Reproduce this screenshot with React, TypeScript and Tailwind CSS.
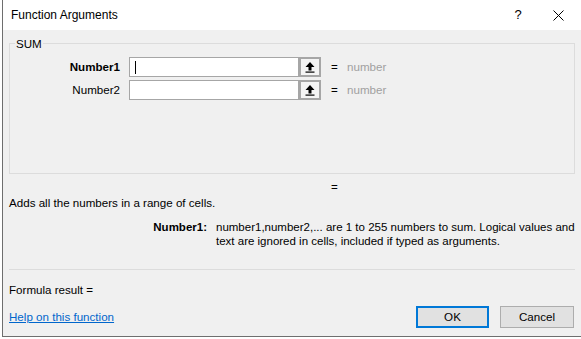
import React from "react";

const font = { fontFamily: '"Liberation Sans", Arial, sans-serif' };

function RefButton() {
  return (
    <div className="flex h-[20px] w-[22px] items-center justify-center border-2 border-[#a6a6a6] bg-[#f4f4f4]">
      <svg width="10" height="11" viewBox="0 0 10 11">
        <polygon points="5,0 9.5,5 6.5,5 6.5,8.5 3.5,8.5 3.5,5 0.5,5" fill="#000" />
        <rect x="0.5" y="9.5" width="9" height="1.2" fill="#000" />
      </svg>
    </div>
  );
}

function ArgRow({ label, bold, cursor }: { label: string; bold?: boolean; cursor?: boolean }) {
  return (
    <div className="flex h-[20px] items-center">
      <div className={`w-[119px] pr-[9px] text-right text-[11.6px] text-[#000] ${bold ? "font-bold" : ""}`}>{label}</div>
      <div className="flex h-[20px] w-[170px] items-center border border-[#a6a6a6] bg-white pl-[5px]">
        {cursor && <div className="h-[13px] w-px bg-black" />}
      </div>
      <RefButton />
      <div className="ml-[10px] w-[16px] text-[11.6px] text-black">=</div>
      <div className="text-[11.6px] text-[#a0a0a0]">number</div>
    </div>
  );
}

export default function App() {
  return (
    <div className="h-[339px] w-[581px] overflow-hidden bg-white" style={font}>
      <div className="ml-[2px] flex h-[337px] w-[579px] flex-col border-b border-l border-[#6e6e6e] bg-[#f0f0f0]">
        {/* Title bar */}
        <div className="flex h-[30px] shrink-0 items-center bg-white pl-[8px]">
          <div className="flex-1 text-[12px] text-black">Function Arguments</div>
          <div className="w-[20px] text-center text-[13px] text-black">?</div>
          <div className="ml-[20px] mr-[13px] flex w-[20px] items-center justify-center">
            <svg width="11" height="11" viewBox="0 0 11 11">
              <path d="M0.5 0.5 L10.5 10.5 M10.5 0.5 L0.5 10.5" stroke="#000" strokeWidth="1" />
            </svg>
          </div>
        </div>

        {/* Body */}
        <div className="flex flex-1 flex-col px-[6px]">
          {/* Group box */}
          <div className="relative mt-[13px] h-[131px] w-[566px] border border-[#dcdcdc]">
            <div className="absolute left-[5px] top-[-7px] bg-[#f0f0f0] px-[1px] text-[11.6px] leading-[14px] text-black">SUM</div>
            <div className="mt-[13px] flex flex-col gap-[3px]">
              <ArgRow label="Number1" bold cursor />
              <ArgRow label="Number2" />
            </div>
          </div>

          <div className="ml-[322px] mt-[6px] h-[14px] text-[11.6px] leading-[14px] text-black">=</div>
          <div className="mt-[2px] text-[11.6px] leading-[14px] text-black">Adds all the numbers in a range of cells.</div>

          <div className="mt-[10px] flex text-[11.5px] leading-[14px] text-black">
            <div className="w-[207px] shrink-0 pr-[9px] text-right font-bold">Number1:</div>
            <div className="w-[362px] shrink-0">
              number1,number2,... are 1 to 255 numbers to sum. Logical values and text are ignored in cells, included if typed as arguments.
            </div>
          </div>

          <div className="mt-[21px] h-px w-[566px] bg-[#dcdcdc]" />

          <div className="mt-[13px] text-[11.6px] leading-[14px] text-black">Formula result =</div>

          <div className="mt-[9px] flex items-center">
            <div className="flex-1 text-[11.6px] leading-[14px] text-[#0066cc] underline">Help on this function</div>
            <div className="flex h-[22px] w-[73px] items-center justify-center border-2 border-[#0078d7] bg-[#e1e1e1] text-[11.6px] text-black">OK</div>
            <div className="ml-[11px] mr-[1px] flex h-[22px] w-[74px] items-center justify-center border border-[#adadad] bg-[#e1e1e1] text-[11.6px] text-black">Cancel</div>
          </div>
        </div>
      </div>
    </div>
  );
}
